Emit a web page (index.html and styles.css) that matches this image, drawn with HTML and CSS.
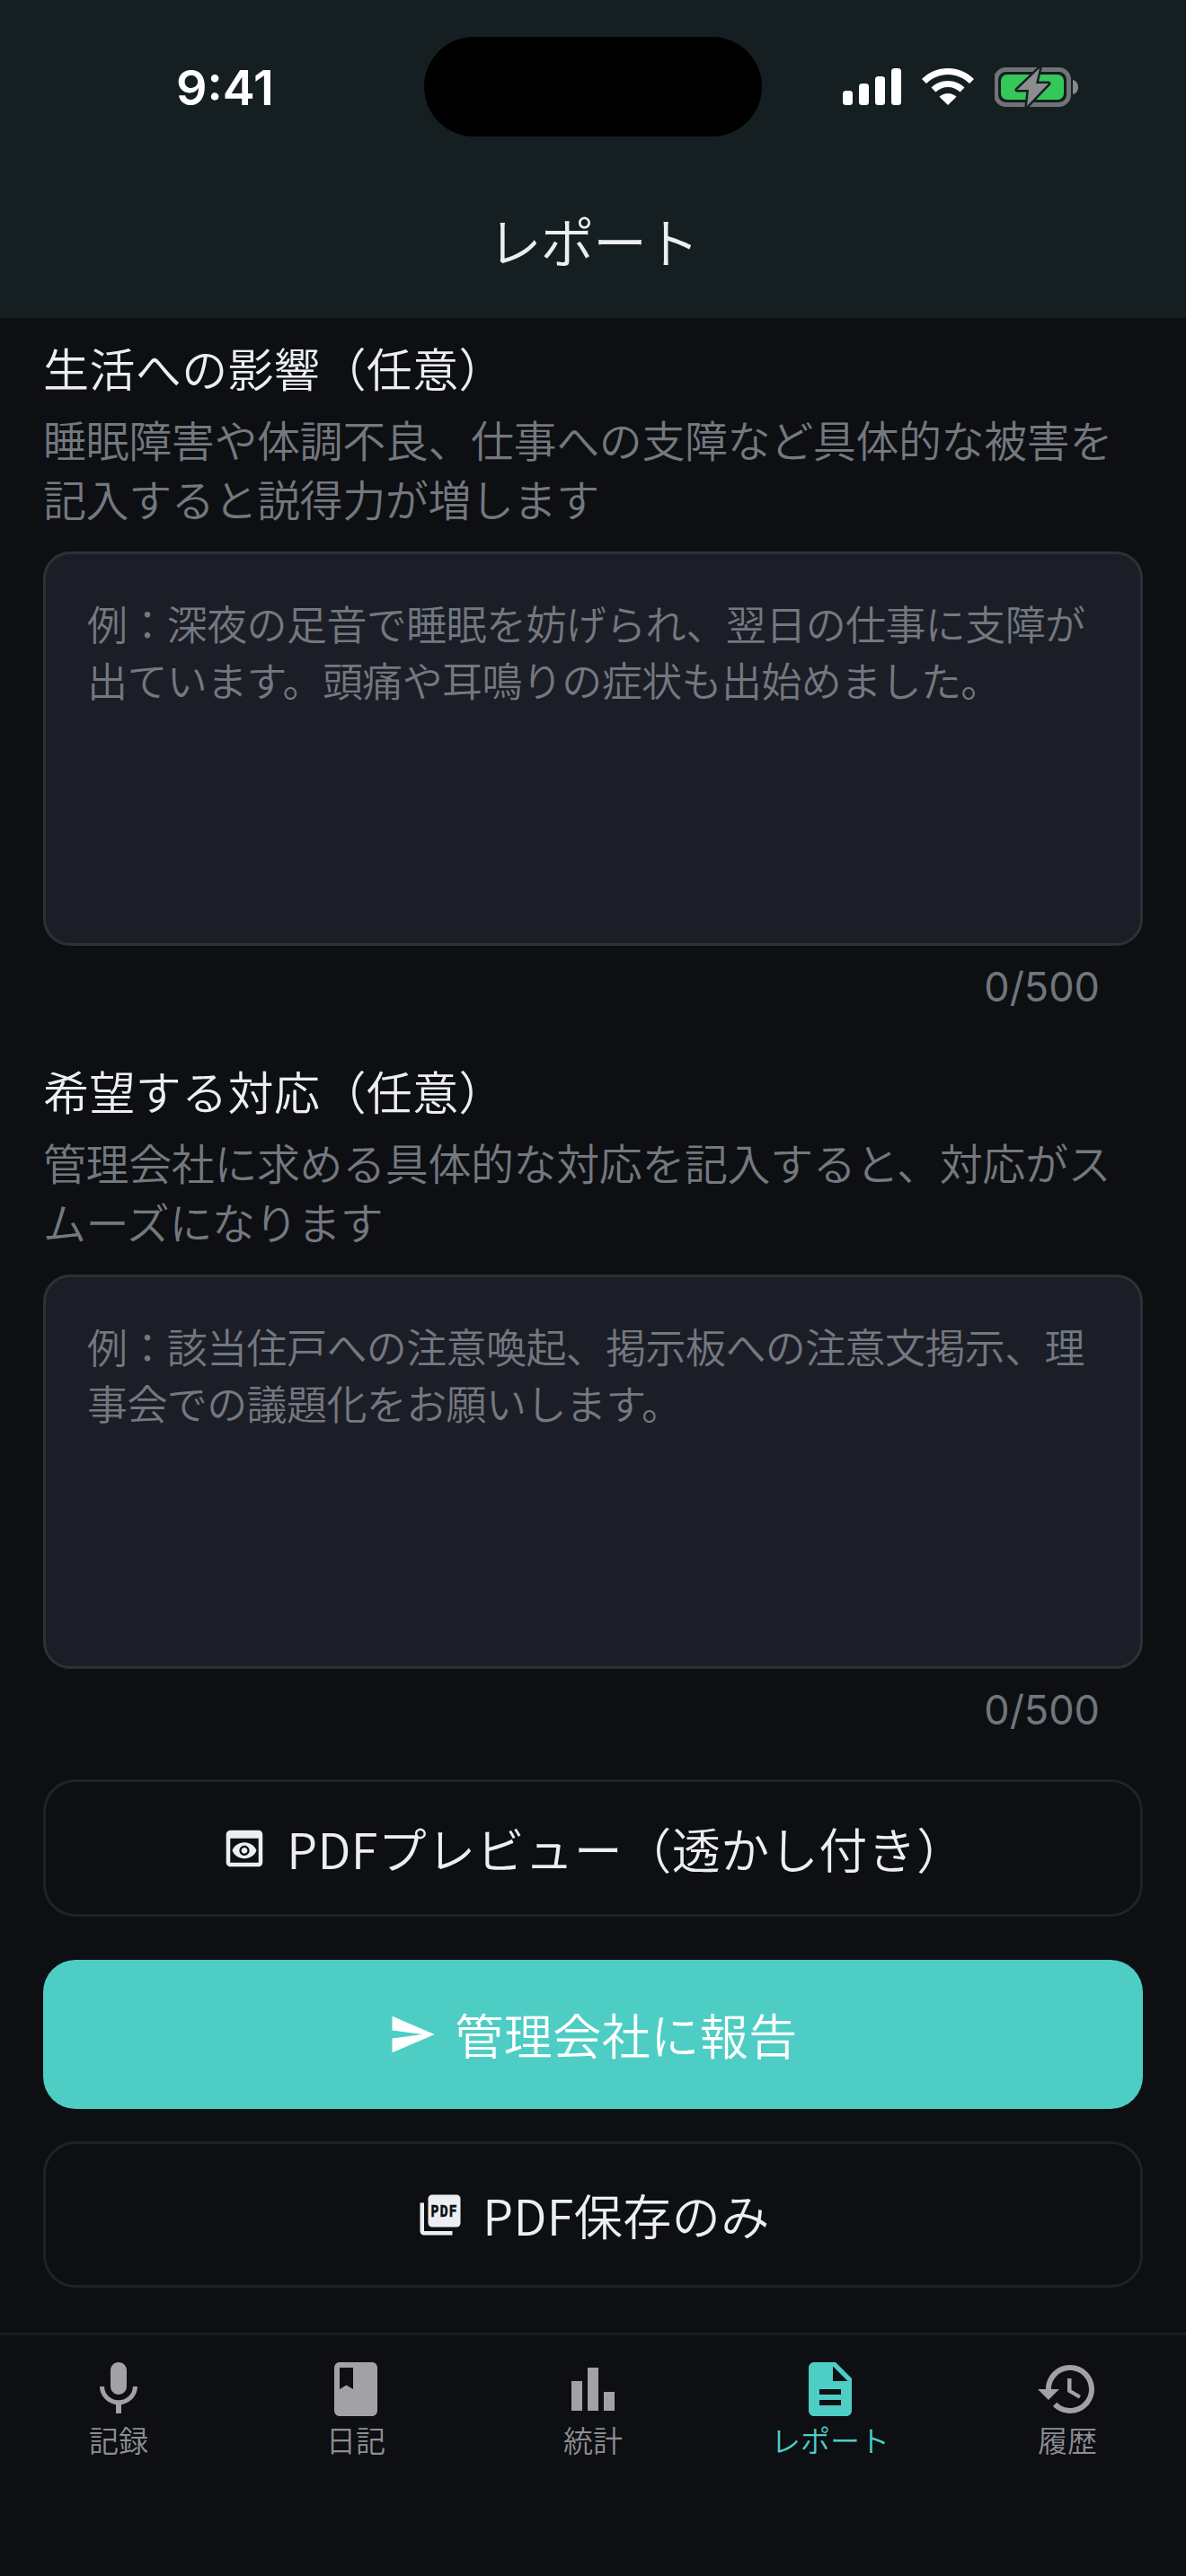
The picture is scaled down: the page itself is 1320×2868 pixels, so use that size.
FILE: index.html
```html
<!DOCTYPE html>
<html lang="ja">
<head>
<meta charset="utf-8">
<title>レポート</title>
<link rel="stylesheet" href="styles.css">
</head>
<body>
<div class="app">
  <header class="header">
    <div class="status">
      <span class="time">9:41</span>
      <div class="island"></div>
      <div class="status-icons">
        <svg class="signal" viewBox="0 0 65 41"><rect x="0" y="25" width="11" height="16" rx="3.5"/><rect x="18" y="17" width="11" height="24" rx="3.5"/><rect x="36" y="9" width="11" height="32" rx="3.5"/><rect x="54" y="0" width="11" height="41" rx="3.5"/></svg>
        <svg class="wifi" viewBox="0 0 58 41"><path d="M29 0C18 0 8 4 0 12l5 5c6.500-6.300 15-10 24-10s17.500 3.700 24 10l5-5C50 4 40 0 29 0z"/><path d="M29 14c-7 0-13.500 2.700-18.500 7.500l5 5C19 23 24 21 29 21s10 2 13.500 5.500l5-5C42.500 16.700 36 14 29 14z"/><path d="M29 28c-3.500 0-7 1.300-9.500 3.800L29 41l9.500-9.200C36 29.300 32.500 28 29 28z"/></svg>
        <svg class="battery" viewBox="0 0 94 44">
          <rect class="batt-shell" x="1.500" y="2.500" width="81" height="39" rx="11"/>
          <rect class="batt-fill" x="7" y="8" width="70" height="28" rx="7"/>
          <path class="batt-nub" d="M87 14c4 1 6 4 6 8s-2 7-6 8z"/>
          <path class="batt-bolt" d="M50 1 25 25h13l-2 18 24-25H46z"/>
        </svg>
      </div>
    </div>
    <h1 class="title">レポート</h1>
  </header>

  <main class="content">
    <section class="field">
      <h2 class="field-label">生活への影響（任意）</h2>
      <p class="field-help">睡眠障害や体調不良、仕事への支障など具体的な被害を記入すると説得力が増します</p>
      <div class="textbox">例：深夜の足音で睡眠を妨げられ、翌日の仕事に支障が出ています。頭痛や耳鳴りの症状も出始めました。</div>
      <div class="counter">0/500</div>
    </section>
    <section class="field">
      <h2 class="field-label">希望する対応（任意）</h2>
      <p class="field-help">管理会社に求める具体的な対応を記入すると、対応がスムーズになります</p>
      <div class="textbox">例：該当住戸への注意喚起、掲示板への注意文掲示、理事会での議題化をお願いします。</div>
      <div class="counter">0/500</div>
    </section>
    <div class="actions">
      <button class="btn btn-outline btn-preview">
        <svg class="btn-icon" viewBox="0 0 24 24"><path d="M19 3H5c-1.110 0-2 .9-2 2v14c0 1.100.89 2 2 2h14c1.100 0 2-.9 2-2V5c0-1.100-.89-2-2-2zm0 16H5V7h14v12zm-5.500-6c0 .83-.67 1.500-1.500 1.500s-1.500-.67-1.500-1.500.67-1.500 1.500-1.500 1.500.67 1.500 1.500zM12 9c-2.730 0-5.060 1.660-6 4 .94 2.340 3.270 4 6 4s5.060-1.660 6-4c-.94-2.340-3.270-4-6-4zm0 6.500c-1.380 0-2.500-1.120-2.500-2.500s1.120-2.500 2.500-2.500 2.500 1.120 2.500 2.500-1.120 2.500-2.500 2.500z"/></svg>
        <span>PDFプレビュー（透かし付き）</span>
      </button>
      <button class="btn btn-primary">
        <svg class="btn-icon" viewBox="0 0 24 24"><path d="M2.010 21 23 12 2.010 3 2 10l15 2-15 2z"/></svg>
        <span>管理会社に報告</span>
      </button>
      <button class="btn btn-outline btn-save">
        <svg class="btn-icon" viewBox="0 0 24 24"><path d="M8 2h12a2 2 0 0 1 2 2v12a2 2 0 0 1-2 2H8a2 2 0 0 1-2-2V4a2 2 0 0 1 2-2z"/><path d="M4 6H2v14c0 1.100.9 2 2 2h14v-2H4z"/><text class="pdf-mark" x="14" y="13" textLength="13.500" lengthAdjust="spacingAndGlyphs">PDF</text></svg>
        <span>PDF保存のみ</span>
      </button>
    </div>
  </main>

  <nav class="tabbar">
    <a class="tab"><svg viewBox="0 0 24 24"><path d="M12 14c1.660 0 2.990-1.340 2.990-3L15 5c0-1.660-1.340-3-3-3S9 3.340 9 5v6c0 1.660 1.340 3 3 3zm5.300-3c0 3-2.540 5.100-5.300 5.100S6.700 14 6.700 11H5c0 3.410 2.720 6.230 6 6.720V21h2v-3.280c3.280-.48 6-3.300 6-6.720h-1.700z"/></svg><span>記録</span></a>
    <a class="tab"><svg viewBox="0 0 24 24"><path d="M18 2H6c-1.100 0-2 .9-2 2v16c0 1.100.9 2 2 2h12c1.100 0 2-.9 2-2V4c0-1.100-.9-2-2-2zM6 4h5v8l-2.500-1.500L6 12V4z"/></svg><span>日記</span></a>
    <a class="tab"><svg viewBox="0 0 24 24"><path d="M4 9h4v11H4zM10 4h4v16h-4zM16 13h4v7h-4z"/></svg><span>統計</span></a>
    <a class="tab tab-active"><svg viewBox="0 0 24 24"><path d="M14 2H6c-1.100 0-1.990.9-1.990 2L4 20c0 1.100.89 2 1.990 2H18c1.100 0 2-.9 2-2V8l-6-6zm2 16H8v-2h8v2zm0-4H8v-2h8v2zm-3-5V3.500L18.500 9H13z"/></svg><span>レポート</span></a>
    <a class="tab"><svg viewBox="0 0 24 24"><path d="M13 3c-4.970 0-9 4.030-9 9H1l3.890 3.890.07.14L9 12H6c0-3.870 3.130-7 7-7s7 3.130 7 7-3.130 7-7 7c-1.930 0-3.680-.79-4.940-2.060l-1.420 1.420C8.270 19.990 10.510 21 13 21c4.970 0 9-4.030 9-9s-4.030-9-9-9zm-1 5v5l4.280 2.540.72-1.210-3.500-2.080V8H12z"/></svg><span>履歴</span></a>
  </nav>
</div>
</body>
</html>
```

FILE: styles.css
```css
* { box-sizing: border-box; margin: 0; padding: 0; }
html, body { width: 1320px; height: 2868px; overflow: hidden; background: #0d0f13; }
body { font-family: "Noto Sans CJK JP", "Noto Sans", sans-serif; font-weight: 350; color: #eceef1; }

.app { width: 1320px; height: 2868px; display: flex; flex-direction: column; }

.header { height: 354px; background: #151f21; display: flex; flex-direction: column; flex: none; }
.status { height: 194px; display: flex; align-items: flex-start; position: relative; }
.time { font-family: Inter, "Liberation Sans", sans-serif; font-weight: 600; font-size: 54px; line-height: 66px; color: #fff; margin: 65px 0 0 196px; }
.island { position: absolute; left: 472px; top: 41px; width: 376px; height: 111px; border-radius: 56px; background: #000; }
.status-icons { position: absolute; left: 938px; top: 75px; display: flex; align-items: flex-start; gap: 23px; }
.signal { width: 65px; height: 41px; margin-top: 1px; fill: #fff; }
.wifi { width: 58px; height: 41px; margin-top: 1px; fill: #fff; }
.battery { width: 94px; height: 44px; }
.batt-shell { fill: none; stroke: #6f7476; stroke-width: 5px; }
.batt-fill { fill: #34c759; }
.batt-nub { fill: #85898a; }
.batt-bolt { fill: #8a8e8f; stroke: #151f21; stroke-width: 5px; stroke-linejoin: round; paint-order: stroke; }
.title { font-size: 60px; font-weight: 350; letter-spacing: -1.5px; line-height: 84px; text-align: center; color: #eceef1; margin-top: 31px; }

.content { flex: 1; min-height: 0; padding: 22px 48px 0; display: flex; flex-direction: column; }
.field { display: flex; flex-direction: column; margin-bottom: 55px; }
.field-label { font-size: 51px; font-weight: 350; letter-spacing: .4px; line-height: 66px; color: #eceef1; }
.field-help { font-size: 48px; letter-spacing: -.4px; line-height: 66px; color: #74787f; margin-top: 13px; }
.textbox { height: 439px; margin-top: 27px; padding: 45px 46px; background: #1b1e27; border: 3px solid #2e3036; border-radius: 30px; font-size: 45px; letter-spacing: -.6px; line-height: 63px; color: #74787f; }
.counter { margin-top: 19px; padding-right: 48px; text-align: right; font-family: Inter, "Liberation Sans", sans-serif; font-weight: 400; font-size: 45px; line-height: 54px; color: #71757d; }

.actions { display: flex; flex-direction: column; margin-top: -5px; }
.btn { width: 100%; display: flex; align-items: center; justify-content: center; gap: 20px; font-family: inherit; font-size: 54px; letter-spacing: .5px; line-height: 76px; font-weight: 350; color: #eceef1; border-radius: 36px; }
.btn-outline { background: transparent; border: 3px solid #202227; }
.btn-preview { height: 153px; }
.btn-primary { height: 166px; margin-top: 48px; background: #4ecdc4; border: 0; color: #fff; }
.btn-save { height: 163px; margin-top: 36px; }
.btn-icon { width: 54px; height: 54px; fill: currentColor; flex: none; }
.pdf-mark { font-family: "DejaVu Sans Mono", monospace; font-weight: 700; font-size: 8px; text-anchor: middle; fill: #0d0f13; stroke: #0d0f13; stroke-width: .2px; }

.tabbar { height: 271px; flex: none; border-top: 3px solid #1c1e22; display: grid; grid-template-columns: repeat(5, 1fr); align-content: start; padding-top: 24px; background: #0d0f13; }
.tab { display: flex; flex-direction: column; align-items: center; color: #8e8e93; font-size: 33px; line-height: 46px; }
.tab svg { width: 72px; height: 72px; margin-bottom: -3px; fill: #a1a1a6; }
.tab-active { color: #4ecdc4; }
.tab-active svg { fill: #4ecdc4; }
```
